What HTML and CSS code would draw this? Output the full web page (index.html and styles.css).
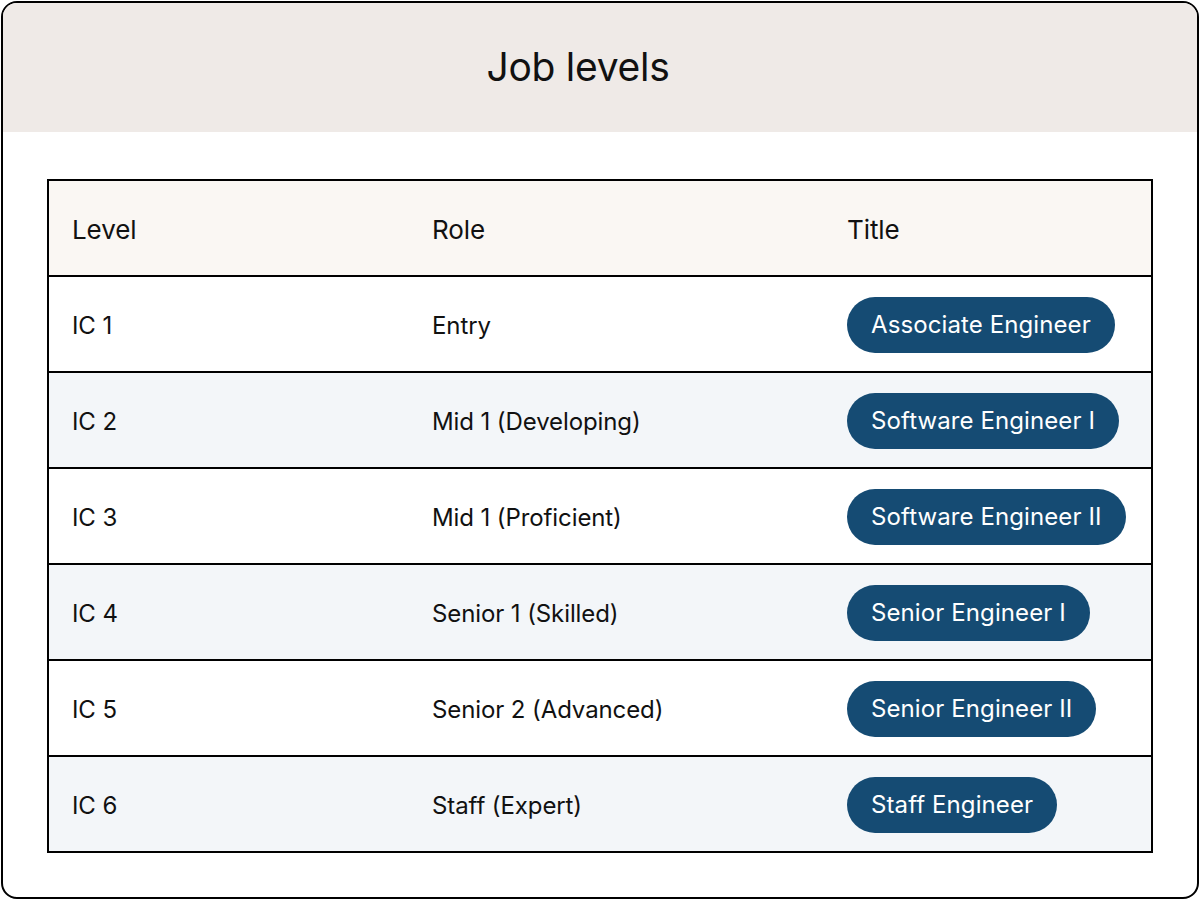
FILE: index.html
```html
<!DOCTYPE html>
<html>
<head>
<meta charset="utf-8">
<link rel="stylesheet" href="styles.css">
</head>
<body>
<div class="card">
  <header class="card-head">
    <h1 class="card-title">Job levels</h1>
  </header>
  <div class="card-body">
    <table class="levels">
      <thead>
        <tr>
          <th class="col-level">Level</th>
          <th class="col-role">Role</th>
          <th class="col-title">Title</th>
        </tr>
      </thead>
      <tbody>
        <tr><td>IC 1</td><td>Entry</td><td><span class="pill">Associate Engineer</span></td></tr>
        <tr><td>IC 2</td><td>Mid 1 (Developing)</td><td><span class="pill">Software Engineer I</span></td></tr>
        <tr><td>IC 3</td><td>Mid 1 (Proficient)</td><td><span class="pill">Software Engineer II</span></td></tr>
        <tr><td>IC 4</td><td>Senior 1 (Skilled)</td><td><span class="pill">Senior Engineer I</span></td></tr>
        <tr><td>IC 5</td><td>Senior 2 (Advanced)</td><td><span class="pill">Senior Engineer II</span></td></tr>
        <tr><td>IC 6</td><td>Staff (Expert)</td><td><span class="pill">Staff Engineer</span></td></tr>
      </tbody>
    </table>
  </div>
</div>
</body>
</html>
```
FILE: styles.css
```css
* { box-sizing: border-box; }
html, body {
  margin: 0;
  padding: 0;
  background: #ffffff;
}
body {
  font-family: Inter, "Noto Sans", sans-serif;
  color: #111111;
  padding: 1px;
}
.card {
  width: 1198px;
  height: 898px;
  border: 2px solid #000;
  border-radius: 16px;
  overflow: hidden;
  background: #fff;
}
.card-head {
  background: #efeae7;
  height: 129px;
  display: flex;
  align-items: center;
  justify-content: center;
  padding-right: 44px;
}
.card-title {
  margin: 0;
  font-size: 39px;
  font-weight: 400;
  letter-spacing: -0.3px;
  color: #111;
  padding-bottom: 2px;
}
.card-body {
  padding: 47px 44px 0 44px;
}
.levels {
  width: 1106px;
  border-collapse: collapse;
  border: 2px solid #000;
  table-layout: fixed;
  font-size: 24px;
  letter-spacing: -0.1px;
}
.levels th, .levels td {
  height: 96px;
  padding: 2px 23px 0 23px;
  text-align: left;
  font-weight: 400;
  border-top: 2px solid #000;
  vertical-align: middle;
}
.levels th:nth-child(2), .levels td:nth-child(2) {
  padding-left: 24px;
}
.levels thead th {
  background: #faf7f3;
  border-top: none;
  font-size: 26px;
}
.col-level { width: 360px; }
.col-role { width: 416px; }
.levels tbody tr:nth-child(even) td { background: #f3f6f9; }
.pill {
  display: inline-block;
  background: #154b73;
  color: #fff;
  border-radius: 28px;
  height: 56px;
  line-height: 56px;
  padding: 0 24px;
  letter-spacing: 0.1px;
  white-space: nowrap;
}
```
